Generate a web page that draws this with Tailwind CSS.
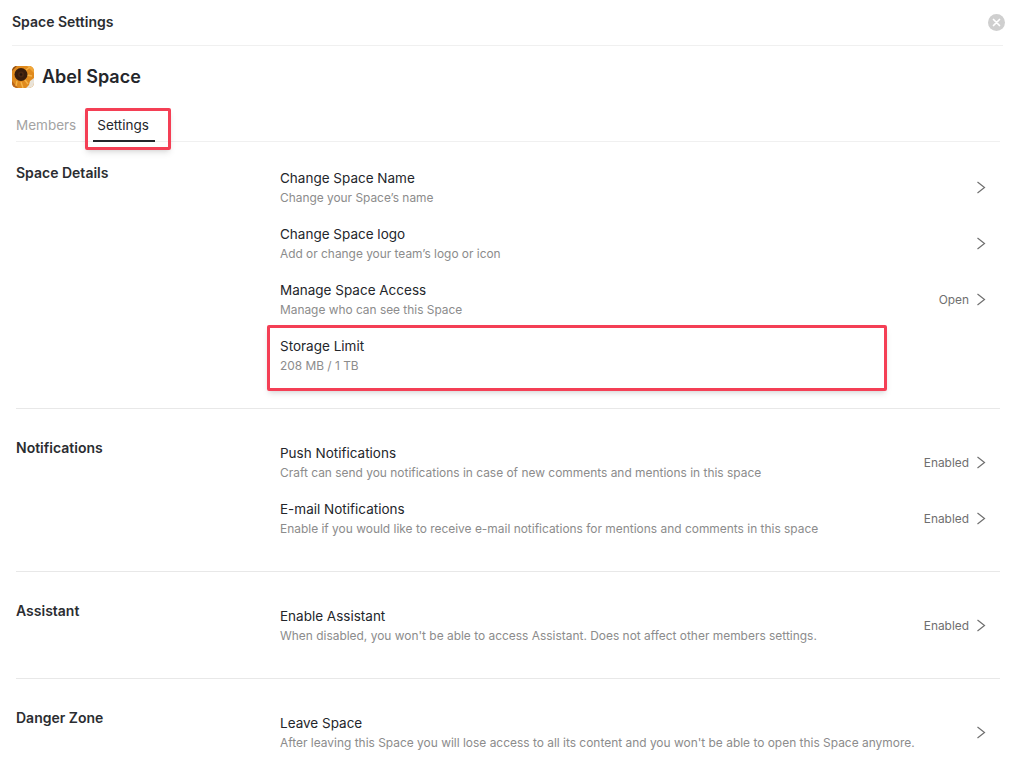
<!DOCTYPE html>
<html lang="en">
<head>
  <meta charset="UTF-8">
  <title>Space Settings</title>
  <script src="https://cdn.jsdelivr.net/npm/@tailwindcss/browser@4"></script>
</head>
<body class="bg-white h-[761px] overflow-hidden font-['Inter',sans-serif] text-[#24262b]">
  <div class="relative h-[761px] overflow-hidden">
    <!-- header -->
    <div class="mx-3 w-[991px] h-[46px] border-b border-[#f0f0f0] flex items-center justify-between">
      <h1 class="text-[14px] font-semibold mb-[2px] text-[#2b2d31]">Space Settings</h1>
      <button class="w-[17px] h-[17px] mr-[-2px] rounded-full bg-[#cfcfcf] flex items-center justify-center">
        <svg class="w-[9px] h-[9px]" viewBox="0 0 9 9" fill="none" stroke="#fff" stroke-width="1.7" stroke-linecap="round"><path d="M1.5 1.5l6 6M7.5 1.5l-6 6"/></svg>
      </button>
    </div>

    <div class="ml-3 mt-[20px] flex items-center gap-2 h-[22px]">
      <svg class="w-[22px] h-[22px] rounded-[5px]" viewBox="0 0 22 22">
        <rect width="22" height="22" fill="#e08a1e"/>
        <path d="M0 0h5L0 5z" fill="#8a4a14"/>
        <path d="M0 22v-7l6 7z" fill="#b8641a"/>
        <path d="M15 0h7v7z" fill="#efa63a"/>
        <path d="M9 16l2 6M5 15l-1 5M13 14l3 4M15 9l5 1M14 4l4-3" stroke="#f5b548" stroke-width="1.4"/>
        <path d="M22 12v10h-8l3-3 1-4z" fill="#e9e3d8"/>
        <circle cx="9" cy="8.5" r="6.5" fill="#3a1d0c"/>
        <circle cx="9" cy="8.5" r="3" fill="#4a2610"/>
        <circle cx="9" cy="8.5" r="1.2" fill="#26130a"/>
      </svg>
      <h2 class="text-[18px] font-semibold mb-[2px]">Abel Space</h2>
    </div>

    <!-- tabs -->
    <div class="mx-4 mt-[20px] h-[34px] w-[984px] border-b border-[#f0f0f0] flex text-[13.5px] leading-[34px]">
      <span class="text-[#a3a3a3]">Members</span>
      <span class="ml-[17px] w-[62px] h-[34px] pl-1 border-b-2 border-[#24262b]">Settings</span>
    </div>

    <!-- Space Details -->
    <section class="mx-4 w-[984px] pt-[18px] pb-[24px] border-b border-[#e8e8e8] flex">
      <h3 class="w-[264px] text-[14px] font-semibold leading-[26px] text-[#2b2d31]">Space Details</h3>
      <div class="flex-1">
        <div class="h-14 flex items-center justify-between">
          <div>
            <p class="text-[13.5px] leading-5">Change Space Name</p>
            <p class="text-[11.9px] leading-5 text-[#8c8c8c]">Change your Space’s name</p>
          </div>
          <div class="flex items-center gap-[6px] text-[11.9px] text-[#6f6f6f]">
            <svg class="w-3 h-4 mr-[13px]" viewBox="0 0 12 16" fill="none" stroke="#6f6f6f" stroke-width="1.2"><path d="M2.5 2l7 5.5-7 5.5"/></svg>
          </div>
        </div>
        <div class="h-14 flex items-center justify-between">
          <div>
            <p class="text-[13.5px] leading-5">Change Space logo</p>
            <p class="text-[11.9px] leading-5 text-[#8c8c8c]">Add or change your team’s logo or icon</p>
          </div>
          <div class="flex items-center gap-[6px] text-[11.9px] text-[#6f6f6f]">
            <svg class="w-3 h-4 mr-[13px]" viewBox="0 0 12 16" fill="none" stroke="#6f6f6f" stroke-width="1.2"><path d="M2.5 2l7 5.5-7 5.5"/></svg>
          </div>
        </div>
        <div class="h-14 flex items-center justify-between">
          <div>
            <p class="text-[13.5px] leading-5">Manage Space Access</p>
            <p class="text-[11.9px] leading-5 text-[#8c8c8c]">Manage who can see this Space</p>
          </div>
          <div class="flex items-center gap-[6px] text-[11.9px] text-[#6f6f6f]">
            <span class="leading-4">Open</span>
            <svg class="w-3 h-4 mr-[13px]" viewBox="0 0 12 16" fill="none" stroke="#6f6f6f" stroke-width="1.2"><path d="M2.5 2l7 5.5-7 5.5"/></svg>
          </div>
        </div>
        <div class="h-14 flex items-center justify-between">
          <div>
            <p class="text-[13.5px] leading-5">Storage Limit</p>
            <p class="text-[11.9px] leading-5 text-[#8c8c8c]">208 MB / 1 TB</p>
          </div>
        </div>
      </div>
    </section>

    <!-- Notifications -->
    <section class="mx-4 w-[984px] pt-[26px] pb-[24px] border-b border-[#e8e8e8] flex">
      <h3 class="w-[264px] text-[14px] font-semibold leading-[26px] text-[#2b2d31]">Notifications</h3>
      <div class="flex-1">
        <div class="h-14 flex items-center justify-between">
          <div>
            <p class="text-[13.5px] leading-5">Push Notifications</p>
            <p class="text-[11.95px] leading-5 text-[#8c8c8c]">Craft can send you notifications in case of new comments and mentions in this space</p>
          </div>
          <div class="flex items-center gap-[6px] text-[11.9px] text-[#6f6f6f]">
            <span class="leading-4">Enabled</span>
            <svg class="w-3 h-4 mr-[13px]" viewBox="0 0 12 16" fill="none" stroke="#6f6f6f" stroke-width="1.2"><path d="M2.5 2l7 5.5-7 5.5"/></svg>
          </div>
        </div>
        <div class="h-14 flex items-center justify-between">
          <div>
            <p class="text-[13.5px] leading-5">E-mail Notifications</p>
            <p class="text-[11.95px] leading-5 text-[#8c8c8c]">Enable if you would like to receive e-mail notifications for mentions and comments in this space</p>
          </div>
          <div class="flex items-center gap-[6px] text-[11.9px] text-[#6f6f6f]">
            <span class="leading-4">Enabled</span>
            <svg class="w-3 h-4 mr-[13px]" viewBox="0 0 12 16" fill="none" stroke="#6f6f6f" stroke-width="1.2"><path d="M2.5 2l7 5.5-7 5.5"/></svg>
          </div>
        </div>
      </div>
    </section>

    <!-- Assistant -->
    <section class="mx-4 w-[984px] pt-[26px] pb-[24px] border-b border-[#e8e8e8] flex">
      <h3 class="w-[264px] text-[14px] font-semibold leading-[26px] text-[#2b2d31]">Assistant</h3>
      <div class="flex-1">
        <div class="h-14 flex items-center justify-between">
          <div>
            <p class="text-[13.5px] leading-5">Enable Assistant</p>
            <p class="text-[11.95px] leading-5 text-[#8c8c8c]">When disabled, you won't be able to access Assistant. Does not affect other members settings.</p>
          </div>
          <div class="flex items-center gap-[6px] text-[11.9px] text-[#6f6f6f]">
            <span class="leading-4">Enabled</span>
            <svg class="w-3 h-4 mr-[13px]" viewBox="0 0 12 16" fill="none" stroke="#6f6f6f" stroke-width="1.2"><path d="M2.5 2l7 5.5-7 5.5"/></svg>
          </div>
        </div>
      </div>
    </section>

    <!-- Danger Zone -->
    <section class="mx-4 w-[984px] pt-[26px] flex">
      <h3 class="w-[264px] text-[14px] font-semibold leading-[26px] text-[#2b2d31]">Danger Zone</h3>
      <div class="flex-1">
        <div class="h-14 flex items-center justify-between">
          <div>
            <p class="text-[13.5px] leading-5">Leave Space</p>
            <p class="text-[11.95px] leading-5 text-[#8c8c8c]">After leaving this Space you will lose access to all its content and you won't be able to open this Space anymore.</p>
          </div>
          <div class="flex items-center gap-[6px] text-[11.9px] text-[#6f6f6f]">
            <svg class="w-3 h-4 mr-[13px]" viewBox="0 0 12 16" fill="none" stroke="#6f6f6f" stroke-width="1.2"><path d="M2.5 2l7 5.5-7 5.5"/></svg>
          </div>
        </div>
      </div>
    </section>

    <!-- red annotation boxes drawn over the screenshot -->
    <div class="absolute left-[85px] top-[108px] w-[86px] h-[42px] border-[3px] border-[#f43f55] rounded-[2px] shadow-md"></div>
    <div class="absolute left-[267px] top-[325px] w-[620px] h-[66px] border-[3px] border-[#f43f55] rounded-[2px] shadow-md"></div>
  </div>
</body>
</html>
